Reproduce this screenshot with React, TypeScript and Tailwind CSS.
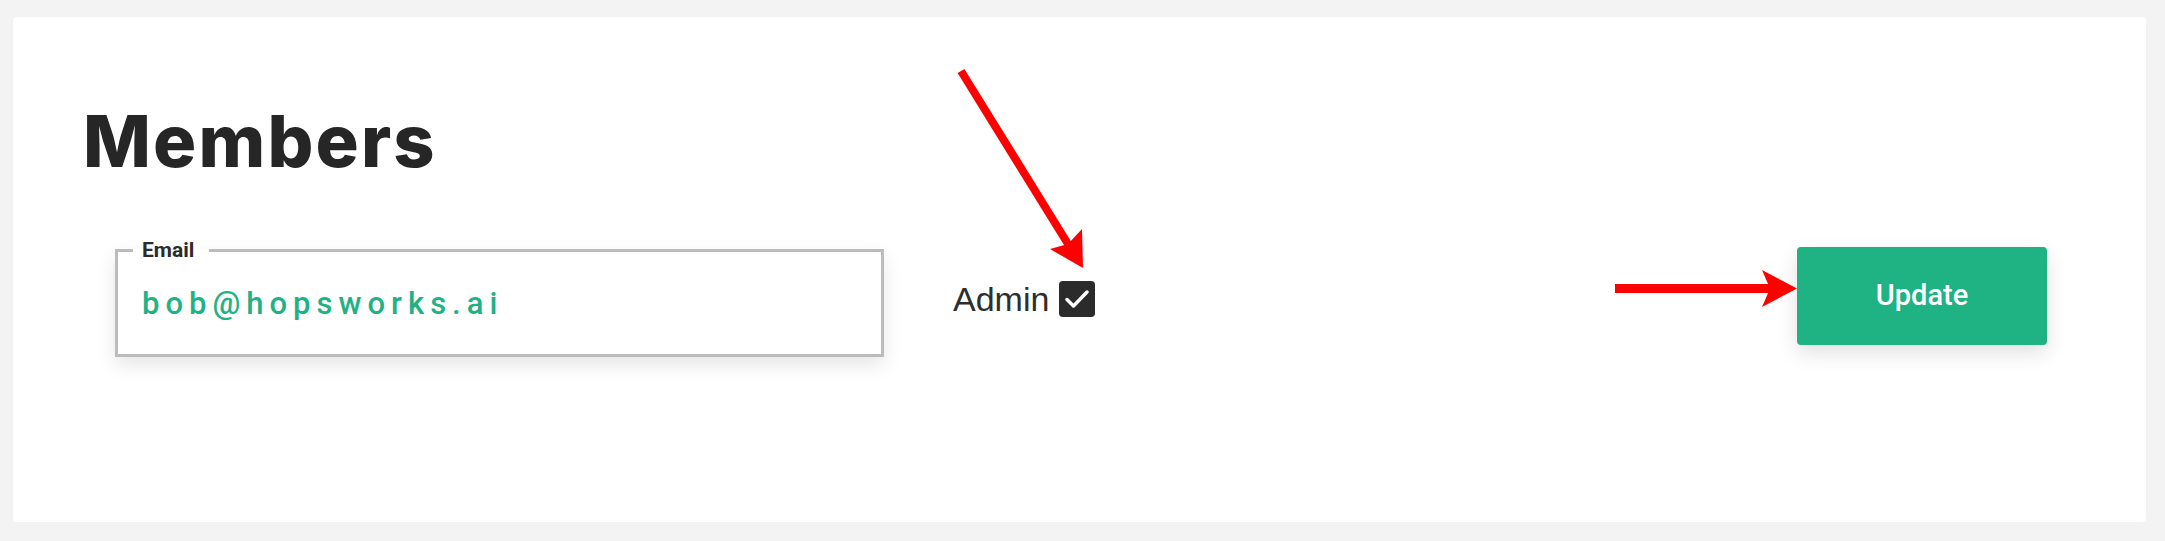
import React from 'react';

// ----------------------------------------------------------------
// Annotation arrows drawn over the page
// ----------------------------------------------------------------
function Arrows() {
  return (
    <svg
      className="pointer-events-none absolute inset-0"
      width={2165}
      height={541}
      viewBox="0 0 2165 541"
    >
      <line x1={961} y1={71} x2={1068} y2={244} stroke="#ff0000" strokeWidth={8} />
      <polygon points="1083,268 1050,249 1068,244 1082,229" fill="#ff0000" />
      <line x1={1615} y1={288.5} x2={1770} y2={288.5} stroke="#ff0000" strokeWidth={9} />
      <polygon points="1797,288.5 1762,270 1770,288.5 1762,307" fill="#ff0000" />
    </svg>
  );
}

// ----------------------------------------------------------------
// Member row
// ----------------------------------------------------------------
function MemberRow() {
  return (
    <div className="flex items-center justify-between pr-[99px] pl-[102px]">
      <div className="flex items-center">
        {/* Email field */}
        <fieldset className="w-[769px] border-[3px] border-[#bcbcbc] bg-white px-0 py-0 shadow-[0_8px_18px_rgba(0,0,0,0.10)]">
          <legend className="ml-[15px] pl-[9px] pr-[15px] font-['Roboto',sans-serif] text-[21px] font-bold leading-[20px] text-[#2b2b2b]">
            Email
          </legend>
          <div className="h-[94px] pl-[24px] pt-[28px]">
            <span className="font-['Roboto',sans-serif] text-[31px] font-medium leading-[32px] tracking-[6px] text-[#1fb283]">
              bob@hopsworks.ai
            </span>
          </div>
        </fieldset>

        {/* Admin checkbox */}
        <label className="ml-[69px] flex items-center gap-[10px]">
          <span className="font-['Liberation_Sans',Arial,sans-serif] text-[34px] leading-none text-[#2e2e2e]">
            Admin
          </span>
          <span className="flex h-[36px] w-[36px] items-center justify-center rounded-[4px] bg-[#2b2b2b]">
            <svg width="24" height="20" viewBox="0 0 24 20" fill="none">
              <path
                d="M2 10.5 L8.5 17 L22 3"
                stroke="#ffffff"
                strokeWidth={3.4}
                strokeLinecap="round"
                strokeLinejoin="round"
              />
            </svg>
          </span>
        </label>
      </div>

      <button
        type="button"
        className="-mt-[6px] flex h-[98px] w-[250px] items-center justify-center rounded-[4px] bg-[#1fb283] font-['Roboto',sans-serif] text-[29px] font-medium text-white shadow-[0_8px_20px_rgba(0,0,0,0.12)]"
      >
        Update
      </button>
    </div>
  );
}

// ----------------------------------------------------------------
// Page
// ----------------------------------------------------------------
export default function App() {
  return (
    <div className="relative h-[541px] w-full bg-[#f3f3f3] pt-[17px] pr-[19px] pb-[19px] pl-[13px]">
      <div className="h-full rounded-[4px] bg-white">
        <h1 className="pt-[88px] pl-[70px] font-['Inter',sans-serif] text-[72px] font-extrabold leading-[72px] tracking-[0.03em] text-[#262626]">
          Members
        </h1>
        <div className="mt-[63px]">
          <MemberRow />
        </div>
      </div>
      <Arrows />
    </div>
  );
}
